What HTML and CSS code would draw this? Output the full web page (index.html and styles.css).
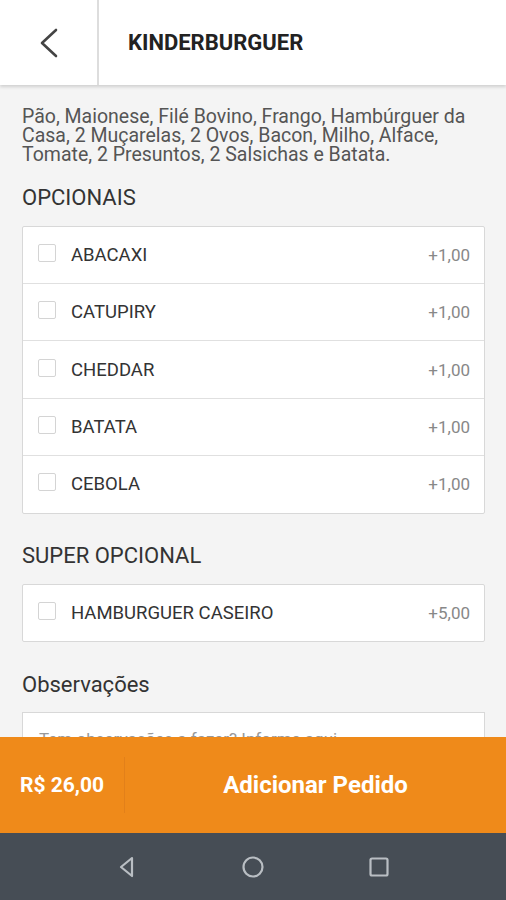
FILE: index.html
```html
<!DOCTYPE html>
<html lang="pt-BR">
<head>
  <meta charset="UTF-8">
  <meta name="viewport" content="width=device-width, initial-scale=1.0">
  <title>Kinderburguer</title>
  <link rel="stylesheet" href="styles.css">
</head>
<body>
  <div class="screen">
    <header class="topbar">
      <div class="back">
        <svg width="22" height="32" viewBox="0 0 22 32"><path d="M18 3 L4 16 L18 29" fill="none" stroke="#444" stroke-width="2.6" stroke-linecap="round" stroke-linejoin="round"/></svg>
      </div>
      <div class="title">KINDERBURGUER</div>
    </header>

    <main class="content">
      <p class="desc">Pão, Maionese, Filé Bovino, Frango, Hambúrguer da Casa, 2 Muçarelas, 2 Ovos, Bacon, Milho, Alface, Tomate, 2 Presuntos, 2 Salsichas e Batata.</p>

      <h2 class="section">OPCIONAIS</h2>
      <div class="list">
        <label class="item"><span class="check"></span><span class="name">ABACAXI</span><span class="price">+1,00</span></label>
        <label class="item"><span class="check"></span><span class="name">CATUPIRY</span><span class="price">+1,00</span></label>
        <label class="item"><span class="check"></span><span class="name">CHEDDAR</span><span class="price">+1,00</span></label>
        <label class="item"><span class="check"></span><span class="name">BATATA</span><span class="price">+1,00</span></label>
        <label class="item"><span class="check"></span><span class="name">CEBOLA</span><span class="price">+1,00</span></label>
      </div>

      <h2 class="section super">SUPER OPCIONAL</h2>
      <div class="list">
        <label class="item"><span class="check"></span><span class="name">HAMBURGUER CASEIRO</span><span class="price">+5,00</span></label>
      </div>

      <h2 class="section obs">Observações</h2>
      <div class="notes">Tem observações a fazer? Informe aqui...</div>
    </main>

    <footer class="orderbar">
      <div class="total">R$ 26,00</div>
      <div class="add">Adicionar Pedido</div>
    </footer>

    <nav class="navbar">
      <svg width="24" height="24" viewBox="0 0 24 24"><path d="M17 3 L6 12 L17 21 Z" fill="none" stroke="#b9bec3" stroke-width="2.2" stroke-linejoin="round"/></svg>
      <svg width="24" height="24" viewBox="0 0 24 24"><circle cx="12" cy="12" r="9.5" fill="none" stroke="#b9bec3" stroke-width="2.2"/></svg>
      <svg width="24" height="24" viewBox="0 0 24 24"><rect x="3.5" y="3.5" width="17" height="17" rx="1.5" fill="none" stroke="#b9bec3" stroke-width="2.2"/></svg>
    </nav>
  </div>
</body>
</html>
```

FILE: styles.css
```css
body {
  margin: 0;
  font-family: Roboto, "Liberation Sans", sans-serif;
  background: #f4f4f4;
}
.screen {
  height: 900px;
  display: flex;
  flex-direction: column;
  overflow: hidden;
}
.topbar {
  height: 85px;
  flex-shrink: 0;
  display: flex;
  background: #fff;
  box-shadow: 0 2px 3px rgba(0, 0, 0, 0.15);
  position: relative;
  z-index: 1;
}
.back {
  width: 97px;
  border-right: 2px solid #ddd;
  display: flex;
  align-items: center;
  justify-content: center;
}
.title {
  display: flex;
  align-items: center;
  padding-left: 29px;
  font-size: 22px;
  font-weight: bold;
  color: #222;
}
.content {
  flex: 1;
  overflow: hidden;
  padding: 0 21px 0 22px;
}
.desc {
  margin: 22px 0 0;
  font-size: 19.5px;
  line-height: 19px;
  color: #555;
}
.section {
  margin: 21px 0 15px;
  font-size: 22px;
  line-height: 26px;
  font-weight: normal;
  color: #333;
}
.super {
  margin-top: 29px;
}
.obs {
  margin: 30px 0 14px;
}
.list {
  background: #fff;
  border: 1px solid #d8d8d8;
  border-radius: 2px;
}
.item {
  height: 56.4px;
  display: flex;
  align-items: center;
  padding: 0 14px 0 15px;
  border-top: 1px solid #e0e0e0;
}
.item:first-child {
  height: 56px;
  border-top: none;
}
.check {
  width: 16px;
  height: 16px;
  border: 1.5px solid #d4d4d4;
  border-radius: 2px;
  margin-top: -4px;
}
.name {
  flex: 1;
  margin-left: 15px;
  font-size: 18.5px;
  color: #333;
}
.price {
  font-size: 17px;
  color: #888;
}
.notes {
  height: 60px;
  background: #fff;
  border: 1px solid #d8d8d8;
  padding: 16px 16px;
  font-size: 17px;
  color: #999;
}
.orderbar {
  height: 96px;
  flex-shrink: 0;
  display: flex;
  align-items: center;
  background: #ef8a1a;
  color: #fff;
  font-weight: bold;
}
.total {
  width: 104px;
  padding-left: 20px;
  height: 56px;
  line-height: 56px;
  font-size: 21px;
  border-right: 1px solid #e2801a;
}
.add {
  flex: 1;
  text-align: center;
  font-size: 24px;
}
.navbar {
  height: 67px;
  flex-shrink: 0;
  background: #464d55;
  display: flex;
  align-items: center;
  justify-content: center;
  gap: 102px;
}
```
